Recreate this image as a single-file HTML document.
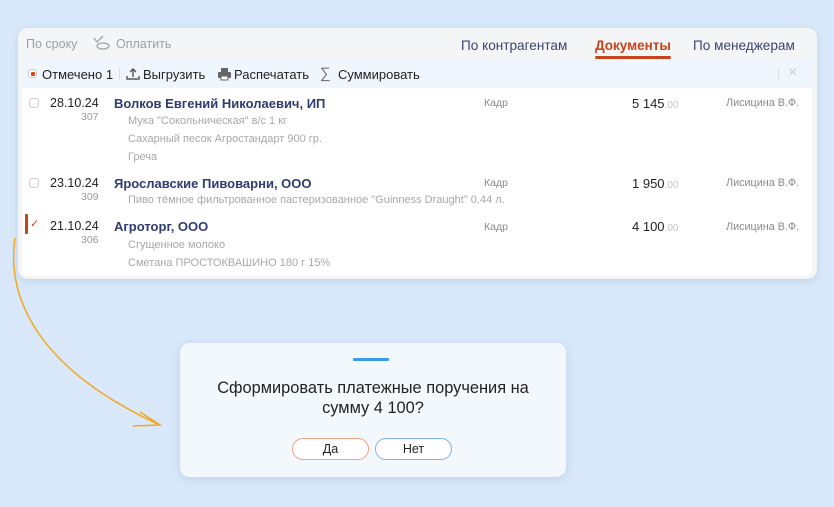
<!DOCTYPE html>
<html><head><meta charset="utf-8"><style>
*{margin:0;padding:0;box-sizing:border-box}
body{width:834px;height:507px;overflow:hidden;background:#d9e8fa;font-family:"Liberation Sans",sans-serif;position:relative}
.a{position:absolute;white-space:nowrap}
.card{position:absolute;left:18px;top:28px;width:799px;height:251px;background:#f4f5f7;border-radius:10px;box-shadow:0 2px 8px rgba(120,150,190,.25)}
.inner{position:absolute;left:22px;top:60px;width:790px;height:216px;background:#fff;border-radius:6px;overflow:hidden}
.tb{position:absolute;left:0;top:0;width:790px;height:28px;background:#f0f6fd}
.nm{font-size:13px;font-weight:bold;color:#2f3b73}
.dt{font-size:12.5px;color:#222}
.num{font-size:10.5px;color:#999}
.sub{font-size:11px;color:#a8a8a8}
.kd{font-size:10.5px;color:#888}
.sum{font-size:13px;color:#222}
.sum span{font-size:10px;color:#c4c4c4}
.mg{font-size:10.8px;color:#8a8a8a}
.cb{position:absolute;width:10px;height:10px;border:1px solid #ccc;border-radius:3px;background:#fff}
.tool{font-size:13px;color:#222}
</style></head><body>
<div class="card"></div>
<div class="a" style="left:26px;top:37px;font-size:12.5px;color:#9aa0a8">По сроку</div>
<svg class="a" style="left:92px;top:35px" width="20" height="16" viewBox="0 0 20 16"><path d="M2 3l3 4 6-6" fill="none" stroke="#9aa" stroke-width="1.3"/><ellipse cx="11" cy="11" rx="6" ry="3" fill="none" stroke="#9aa" stroke-width="1.3"/></svg>
<div class="a" style="left:116px;top:37px;font-size:12.5px;color:#9aa0a8">Оплатить</div>
<div class="a" style="left:461px;top:38px;font-size:13.6px;color:#3a4570">По контрагентам</div>
<div class="a" style="left:595px;top:38px;font-size:13.5px;color:#c8441a;font-weight:bold">Документы</div>
<div class="a" style="left:595px;top:56px;width:76px;height:3px;background:#c8441a;border-radius:2px"></div>
<div class="a" style="left:693px;top:38px;font-size:13.6px;color:#3a4570">По менеджерам</div>
<div class="inner">
 <div class="tb"></div>
 <div class="a" style="left:6px;top:9px;width:9px;height:9px;border:1px solid #ccc;border-radius:3px;background:#fff"></div>
 <div class="a" style="left:9px;top:12px;width:4px;height:4px;background:#d9480f;border-radius:1px"></div>
 <div class="a tool" style="left:20px;top:7px">Отмечено 1</div>
 <div class="a" style="left:97px;top:8px;width:1px;height:12px;background:#ddd"></div>
 <svg class="a" style="left:104px;top:7px" width="14" height="14" viewBox="0 0 14 14"><path d="M7 10V2M4 5l3-3 3 3M1 9v3h12V9" fill="none" stroke="#555" stroke-width="1.4"/></svg>
 <div class="a tool" style="left:121px;top:7px">Выгрузить</div>
 <svg class="a" style="left:195px;top:7px" width="15" height="14" viewBox="0 0 15 14"><rect x="4" y="1" width="7" height="4" fill="#666"/><rect x="1" y="5" width="13" height="6" rx="1" fill="#666"/><rect x="4" y="9" width="7" height="4" fill="#fff" stroke="#666"/></svg>
 <div class="a tool" style="left:212px;top:7px">Распечатать</div>
 <div class="a" style="left:298px;top:5px;font-size:15px;color:#777">∑</div>
 <div class="a tool" style="left:316px;top:7px">Суммировать</div>
 <div class="a" style="left:756px;top:8px;width:1px;height:12px;background:#ddd"></div>
 <div class="a" style="left:766px;top:4px;font-size:16px;color:#ccc">×</div>

 <div class="cb" style="left:7px;top:38px"></div>
 <div class="a dt" style="left:28px;top:36px">28.10.24</div>
 <div class="a num" style="left:59px;top:51px">307</div>
 <div class="a nm" style="left:92px;top:36px">Волков Евгений Николаевич, ИП</div>
 <div class="a sub" style="left:106px;top:55px">Мука "Сокольническая" в/с 1 кг</div>
 <div class="a sub" style="left:106px;top:73px">Сахарный песок Агростандарт 900 гр.</div>
 <div class="a sub" style="left:106px;top:91px">Греча</div>
 <div class="a kd" style="left:462px;top:37px">Кадр</div>
 <div class="a sum" style="left:610px;top:36px">5 145<span>.00</span></div>
 <div class="a mg" style="left:704px;top:37px">Лисицина В.Ф.</div>

 <div class="cb" style="left:7px;top:118px"></div>
 <div class="a dt" style="left:28px;top:116px">23.10.24</div>
 <div class="a num" style="left:59px;top:131px">309</div>
 <div class="a nm" style="left:92px;top:116px">Ярославские Пивоварни, ООО</div>
 <div class="a sub" style="left:106px;top:134px">Пиво тёмное фильтрованное пастеризованное "Guinness Draught" 0.44 л.</div>
 <div class="a kd" style="left:462px;top:117px">Кадр</div>
 <div class="a sum" style="left:610px;top:116px">1 950<span>.00</span></div>
 <div class="a mg" style="left:704px;top:117px">Лисицина В.Ф.</div>

 <div class="a" style="left:3px;top:154px;width:3px;height:20px;background:#c8441a;border-radius:1px"></div>
 <div class="a" style="left:8px;top:157px;font-size:11px;color:#d9480f">✓</div>
 <div class="a dt" style="left:28px;top:159px">21.10.24</div>
 <div class="a num" style="left:59px;top:174px">306</div>
 <div class="a nm" style="left:92px;top:159px">Агроторг, ООО</div>
 <div class="a sub" style="left:106px;top:179px">Сгущенное молоко</div>
 <div class="a sub" style="left:106px;top:197px">Сметана ПРОСТОКВАШИНО 180 г 15%</div>
 <div class="a kd" style="left:462px;top:161px">Кадр</div>
 <div class="a sum" style="left:610px;top:159px">4 100<span>.00</span></div>
 <div class="a mg" style="left:704px;top:161px">Лисицина В.Ф.</div>
</div>
<svg class="a" style="left:0;top:0" width="834" height="507"><path d="M15 238C6 300 40 370 160 425" fill="none" stroke="#f2a81d" stroke-width="1.5"/><path d="M140 412L160 425L133 426" fill="none" stroke="#f2a81d" stroke-width="1.5"/></svg>
<div class="a" style="left:180px;top:343px;width:386px;height:134px;background:#f3f8fd;border-radius:10px;box-shadow:0 2px 10px rgba(120,150,190,.25)"></div>
<div class="a" style="left:353px;top:358px;width:36px;height:3px;background:#3a9af0;border-radius:1px"></div>
<div class="a" style="left:180px;top:378px;width:386px;text-align:center;font-size:16.4px;line-height:20px;color:#222;white-space:normal">Сформировать платежные поручения на<br>сумму 4 100?</div>
<div class="a" style="left:292px;top:438px;width:77px;height:22px;border:1px solid #f0a080;border-radius:11px;background:#fff;text-align:center;font-size:12.5px;line-height:20px;color:#222">Да</div>
<div class="a" style="left:375px;top:438px;width:77px;height:22px;border:1px solid #80b0e8;border-radius:11px;background:#fff;text-align:center;font-size:12.5px;line-height:20px;color:#222">Нет</div>
</body></html>
